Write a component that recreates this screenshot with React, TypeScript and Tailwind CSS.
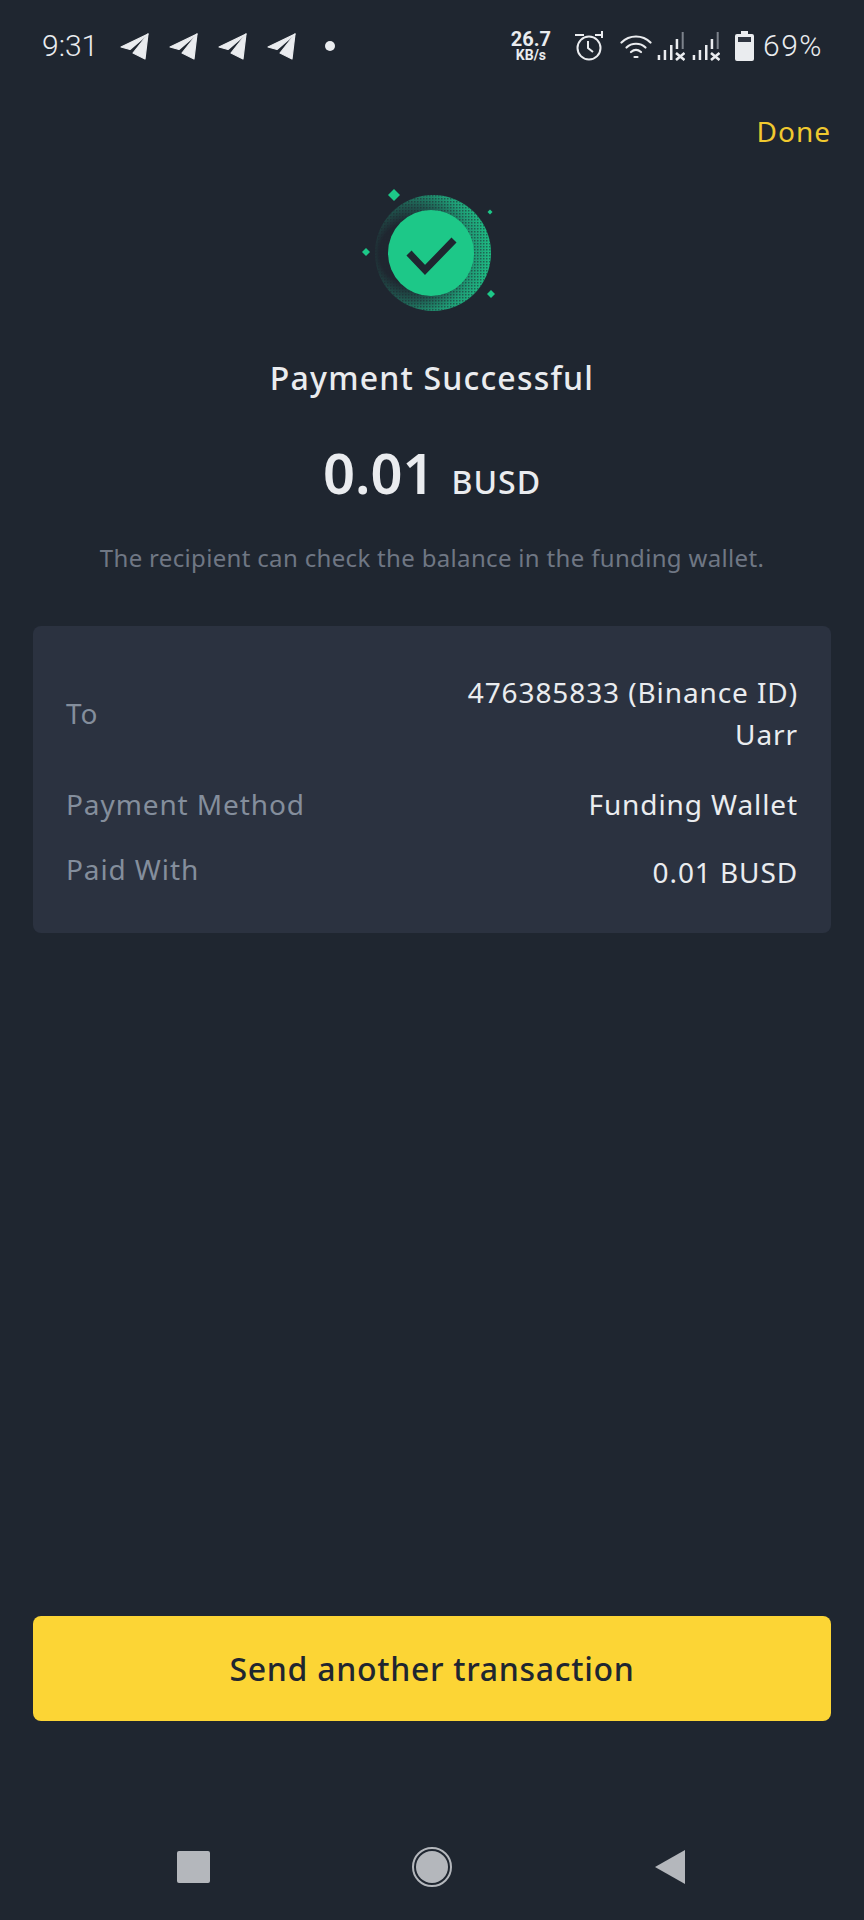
const ROWS = [
  { label: "Payment Method", value: "Funding Wallet" },
  { label: "Paid With", value: "0.01 BUSD" },
];

function PlaneIcon() {
  return (
    <svg width="30" height="27" viewBox="0 0 30 27" fill="#eaecef" stroke="#eaecef" strokeWidth="1.2" strokeLinejoin="round">
      <path d="M2 14 L29 1 L11 16.5 Z" />
      <path d="M29 1 L26 26 L14 20 Z" />
    </svg>
  );
}

function SignalIcon() {
  return (
    <svg width="28" height="29" viewBox="0 0 28 29" fill="#eaecef">
      <rect x="0.7" y="23" width="2.5" height="5" />
      <rect x="6.7" y="18" width="2.5" height="10" />
      <rect x="13" y="13" width="2.5" height="15" />
      <rect x="18.7" y="7" width="2.5" height="10" />
      <rect x="24.7" y="0" width="2" height="17" fill="#7d838c" />
      <path d="M19 21 L27.5 28 M27.5 21 L19 28" stroke="#eaecef" strokeWidth="2.6" />
    </svg>
  );
}

function StatusBar() {
  return (
    <div className="flex h-[90px] shrink-0 items-center pl-[42px] pr-[41px] pt-[2px] font-[Roboto,sans-serif] text-[#eaecef]">
      <span className="text-[30px] font-light leading-none">9:31</span>
      <div className="ml-[21px] flex gap-[19px]">
        <PlaneIcon />
        <PlaneIcon />
        <PlaneIcon />
        <PlaneIcon />
      </div>
      <div className="ml-[29px] h-[10px] w-[10px] rounded-full bg-[#eaecef]" />
      <div className="ml-auto flex flex-col items-center font-bold leading-none">
        <span className="text-[20px] leading-[19px]">26.7</span>
        <span className="text-[14px] leading-[13px]">KB/s</span>
      </div>
      <svg className="ml-[24px]" width="28" height="30" viewBox="0 0 28 30" fill="none" stroke="#eaecef" strokeWidth="2">
        <circle cx="14" cy="17" r="11.5" />
        <path d="M13 10 V17 L18 21" />
        <path d="M0 4 H9 M27 0 V7 M20 4 H27" />
      </svg>
      <svg className="ml-[17px]" width="32" height="25" viewBox="0 0 32 25" fill="none" stroke="#eaecef" strokeWidth="2.2" strokeLinecap="round">
        <path d="M1.5 8.5 C9.5 0.5 22.5 0.5 30.5 8.5" />
        <path d="M6.5 13.5 C11.5 8.5 20.5 8.5 25.5 13.5" />
        <path d="M11 18 C14 15.5 18 15.5 21 18" />
        <path d="M14.5 23 H17.5" />
      </svg>
      <div className="ml-[5px] flex gap-[7px]">
        <SignalIcon />
        <SignalIcon />
      </div>
      <svg className="ml-[15px]" width="19" height="30" viewBox="0 0 19 30" fill="#eaecef">
        <path d="M6 0 H13 V3 H17 Q19 3 19 5 V28 Q19 30 17 30 H2 Q0 30 0 28 V5 Q0 3 2 3 H6 Z" />
        <rect x="3" y="6" width="13" height="5" fill="#2f3540" />
      </svg>
      <span className="ml-[9px] text-[30px] font-light leading-none tracking-[1.5px]">69%</span>
    </div>
  );
}

function SuccessIcon() {
  return (
    <svg width="144" height="128" viewBox="0 0 144 128" className="mx-auto block">
      <defs>
        <radialGradient id="ring" cx="0.3" cy="0.5" r="0.75">
          <stop offset="0.35" stopColor="#1f2630" />
          <stop offset="0.55" stopColor="#1f5a50" />
          <stop offset="0.75" stopColor="#1f9d76" />
          <stop offset="1" stopColor="#1dc888" />
        </radialGradient>
        <pattern id="dots" width="3" height="3" patternUnits="userSpaceOnUse">
          <rect width="1.5" height="1.5" fill="#1f2630" fillOpacity="0.55" />
        </pattern>
      </defs>
      <circle cx="73" cy="64" r="58" fill="url(#ring)" />
      <circle cx="73" cy="64" r="58" fill="url(#dots)" />
      <circle cx="71" cy="64" r="43" fill="#1dc888" />
      <path d="M49 64 L65 81 L94 51" fill="none" stroke="#1f2630" strokeWidth="7" />
      <path d="M34 0 L40 6 L34 12 L28 6 Z" fill="#1dc888" />
      <path d="M6 59 L10 63 L6 67 L2 63 Z" fill="#1dc888" />
      <path d="M130 20.5 L132.5 23 L130 25.5 L127.5 23 Z" fill="#1dc888" />
      <path d="M131 101 L135 105 L131 109 L127 105 Z" fill="#1dc888" />
    </svg>
  );
}

export default function App() {
  return (
    <div className="flex h-[1920px] w-[864px] flex-col overflow-hidden bg-[#1f2630] font-['Noto_Sans',sans-serif] text-[#eaecef]">
      <StatusBar />
      <div className="flex justify-end pr-[33px] pt-[21px]">
        <span className="text-[28px] leading-[40px] tracking-[1px] text-[#f0c92f]">Done</span>
      </div>
      <div className="mt-[38px]">
        <SuccessIcon />
      </div>
      <h1 className="mt-[41px] text-center text-[32px] leading-[40px] font-medium tracking-[1.2px]">Payment Successful</h1>
      <div className="mt-[38px] flex items-baseline justify-center gap-[17px]">
        <span className="text-[56px] leading-[72px] font-semibold">0.01</span>
        <span className="text-[32px] leading-[40px] font-medium tracking-[1px]">BUSD</span>
      </div>
      <p className="mt-[34px] text-center text-[24px] leading-[32px] tracking-[0.33px] text-[#6f7784]">
        The recipient can check the balance in the funding wallet.
      </p>
      <div className="mx-[33px] mt-[52px] flex flex-col rounded-[8px] bg-[#2b3240] px-[33px] pb-[41px] pt-[45px] text-[28px] leading-[40px] tracking-[0.9px]">
        <div className="flex items-center justify-between">
          <span className="text-[#848e9c]">To</span>
          <div className="text-right leading-[42px]">
            <div>476385833 (Binance ID)</div>
            <div>Uarr</div>
          </div>
        </div>
        {ROWS.map((row, i) => (
          <div key={row.label} className={i === 0 ? "mt-[29px] flex justify-between" : "mt-[25px] flex justify-between"}>
            <span className="text-[#848e9c]">{row.label}</span>
            <span className={i === 1 ? "pt-[3px]" : ""}>{row.value}</span>
          </div>
        ))}
      </div>
      <button className="mx-[33px] mt-auto flex h-[105px] items-center justify-center rounded-[8px] bg-[#fcd535] text-[32px] font-medium tracking-[0.7px] text-[#1f2630]">
        Send another transaction
      </button>
      <div className="mb-[33px] mt-[126px] flex items-center justify-between pl-[177px] pr-[178px]">
        <div className="h-[32px] w-[33px] rounded-[2px] bg-[#b4b7bc]" />
        <div className="flex h-[40px] w-[40px] items-center justify-center rounded-full border-2 border-[#b4b7bc]">
          <div className="h-[32px] w-[32px] rounded-full bg-[#b4b7bc]" />
        </div>
        <svg width="32" height="36" viewBox="0 0 32 36" fill="#b4b7bc">
          <path d="M31 1 V35 L1 18 Z" />
        </svg>
      </div>
    </div>
  );
}
